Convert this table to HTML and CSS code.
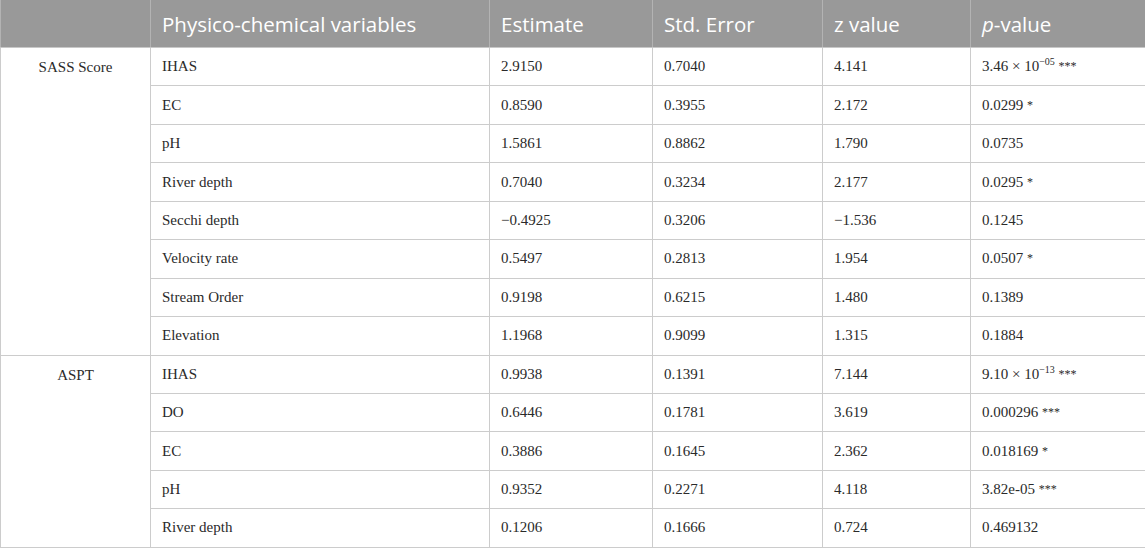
FILE: index.html
```html
<!DOCTYPE html>
<html>
<head>
<meta charset="utf-8">
<link rel="stylesheet" href="styles.css">
</head>
<body>
<table class="data">
  <colgroup>
    <col class="c1"><col class="c2"><col class="c3"><col class="c4"><col class="c5"><col class="c6">
  </colgroup>
  <thead>
    <tr>
      <th></th>
      <th>Physico-chemical variables</th>
      <th>Estimate</th>
      <th>Std. Error</th>
      <th>z value</th>
      <th><i>p</i>-value</th>
    </tr>
  </thead>
  <tbody>
    <tr><td class="grp" rowspan="8">SASS Score</td><td>IHAS</td><td>2.9150</td><td>0.7040</td><td>4.141</td><td>3.46 × 10<sup>−05</sup> <span class="ast">***</span></td></tr>
    <tr><td>EC</td><td>0.8590</td><td>0.3955</td><td>2.172</td><td>0.0299 <span class="ast">*</span></td></tr>
    <tr><td>pH</td><td>1.5861</td><td>0.8862</td><td>1.790</td><td>0.0735</td></tr>
    <tr><td>River depth</td><td>0.7040</td><td>0.3234</td><td>2.177</td><td>0.0295 <span class="ast">*</span></td></tr>
    <tr><td>Secchi depth</td><td>−0.4925</td><td>0.3206</td><td>−1.536</td><td>0.1245</td></tr>
    <tr><td>Velocity rate</td><td>0.5497</td><td>0.2813</td><td>1.954</td><td>0.0507 <span class="ast">*</span></td></tr>
    <tr><td>Stream Order</td><td>0.9198</td><td>0.6215</td><td>1.480</td><td>0.1389</td></tr>
    <tr><td>Elevation</td><td>1.1968</td><td>0.9099</td><td>1.315</td><td>0.1884</td></tr>
    <tr><td class="grp" rowspan="5">ASPT</td><td>IHAS</td><td>0.9938</td><td>0.1391</td><td>7.144</td><td>9.10 × 10<sup>−13</sup> <span class="ast">***</span></td></tr>
    <tr><td>DO</td><td>0.6446</td><td>0.1781</td><td>3.619</td><td>0.000296 <span class="ast">***</span></td></tr>
    <tr><td>EC</td><td>0.3886</td><td>0.1645</td><td>2.362</td><td>0.018169 <span class="ast">*</span></td></tr>
    <tr><td>pH</td><td>0.9352</td><td>0.2271</td><td>4.118</td><td>3.82e-05 <span class="ast">***</span></td></tr>
    <tr><td>River depth</td><td>0.1206</td><td>0.1666</td><td>0.724</td><td>0.469132</td></tr>
  </tbody>
</table>
</body>
</html>
```

FILE: styles.css
```css
html, body {
  margin: 0;
  padding: 0;
  background: #ffffff;
}

.data {
  border-collapse: collapse;
  table-layout: fixed;
  width: 1145px;
  font-family: "Liberation Serif", "Times New Roman", serif;
  font-size: 15px;
  color: #2a2a2a;
}

.c1 { width: 150px; }
.c2 { width: 339px; }
.c3 { width: 163px; }
.c4 { width: 170px; }
.c5 { width: 148px; }
.c6 { width: 175px; }

.data th {
  background: #999999;
  color: #ffffff;
  font-family: "Open Sans", "Noto Sans", sans-serif;
  font-weight: 400;
  font-size: 20.5px;
  text-align: left;
  height: 47px;
  padding: 0 0 0 11px;
  border-left: 1px solid #b3b3b3;
  border-right: 1px solid #b3b3b3;
  border-top: 0;
  border-bottom: 1px solid #c8c8c8;
  vertical-align: middle;
}

.data th i {
  font-style: italic;
}

.data td {
  height: 37.45px;
  padding: 0 0 0 11px;
  border: 1px solid #cccccc;
  vertical-align: middle;
  text-align: left;
  white-space: nowrap;
}

.data td.grp {
  text-align: center;
  vertical-align: top;
  padding: 11px 0 0 0;
}

.data sup {
  font-size: 10px;
  vertical-align: 6px;
  line-height: 0;
}

.ast {
  font-size: 12px;
  position: relative;
  top: -1px;
}
```
